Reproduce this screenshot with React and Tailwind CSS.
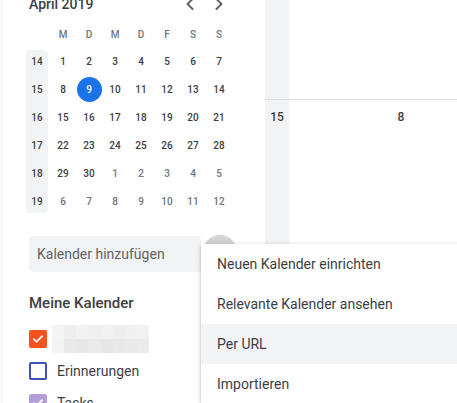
import React from 'react'
import { ChevronLeft, ChevronRight } from 'lucide-react'

const dayHeaders = ['M', 'D', 'M', 'D', 'F', 'S', 'S']

const weeks = [
  { nr: 14, days: [[1], [2], [3], [4], [5], [6], [7]] },
  { nr: 15, days: [[8], [9, 'sel'], [10], [11], [12], [13], [14]] },
  { nr: 16, days: [[15], [16], [17], [18], [19], [20], [21]] },
  { nr: 17, days: [[22], [23], [24], [25], [26], [27], [28]] },
  { nr: 18, days: [[29], [30], [1, 'out'], [2, 'out'], [3, 'out'], [4, 'out'], [5, 'out']] },
  { nr: 19, days: [[6, 'out'], [7, 'out'], [8, 'out'], [9, 'out'], [10, 'out'], [11, 'out'], [12, 'out']] },
]

const blurTop = ['#f4f4f4', '#eeeeee', '#f2f2f2', '#efefef', '#f1f1f1', '#eeeeee', '#f0f0f0', '#f1f1f1']
const blurBottom = ['#f3f3f3', '#e9e9e9', '#e7e7e7', '#eaeaea', '#e6e6e6', '#e8e8e8', '#e9e9e9', '#ebebeb']

const menuItems = ['Neuen Kalender einrichten', 'Relevante Kalender ansehen', 'Per URL', 'Importieren']

function MiniCalendar() {
  return (
    <div>
      <div className="ml-[29px] w-[200px] h-5 -mt-[6px] flex items-center justify-between">
        <span className="text-[14px] font-medium text-[#3c4043]">April 2019</span>
        <div className="flex gap-[9px] text-[#5f6368]">
          <ChevronLeft size={20} strokeWidth={2.4} />
          <ChevronRight size={20} strokeWidth={2.4} />
        </div>
      </div>
      <div className="ml-[24px] mt-[13px] grid grid-cols-[repeat(8,26px)] h-[14px] items-center">
        <span />
        {dayHeaders.map((d, i) => (
          <span key={i} className="text-center text-[10px] font-medium text-[#70757a]">{d}</span>
        ))}
      </div>
      <div className="ml-[24px] mt-[6px] relative">
        <div className="absolute left-[2px] top-[3px] bottom-[2px] w-[22px] rounded-[4px] bg-[#f1f3f4]" />
        {weeks.map((w) => (
          <div key={w.nr} className="relative grid grid-cols-[repeat(8,26px)] h-[28px] items-center">
            <span className="text-center text-[10px] font-medium text-[#3c4043]">{w.nr}</span>
            {w.days.map(([n, kind], i) => (
              <div key={i} className="flex justify-center">
                {kind === 'sel' ? (
                  <span className="w-[25px] h-[25px] rounded-full bg-[#1a73e8] text-white text-[10px] font-medium flex items-center justify-center">{n}</span>
                ) : (
                  <span className={`text-[10px] font-medium ${kind === 'out' ? 'text-[#70757a]' : 'text-[#3c4043]'}`}>{n}</span>
                )}
              </div>
            ))}
          </div>
        ))}
      </div>
    </div>
  )
}

function CalendarRow({ box, children }) {
  return (
    <div className="h-[32px] flex items-center">
      {box}
      {children}
    </div>
  )
}

function Check({ color }) {
  return (
    <span className={`w-[18px] h-[18px] rounded-[2px] flex items-center justify-center ${color}`}>
      <svg width="12" height="12" viewBox="0 0 24 24" fill="none" stroke="white" strokeWidth="3.5" strokeLinecap="square">
        <path d="M4 12.5l5 5L20 6.5" />
      </svg>
    </span>
  )
}

export default function App() {
  return (
    <div className="relative w-[457px] h-[403px] overflow-hidden bg-white flex" style={{ fontFamily: 'Roboto, "Liberation Sans", sans-serif' }}>
      <aside className="w-[265px] shrink-0 shadow-[inset_3px_0_0_#f7f7f7]">
        <MiniCalendar />

        <div className="ml-[29px] mt-[21px] flex">
          <div className="w-[172px] h-[36px] rounded-[4px] bg-[#f1f3f4] flex items-center pl-[8px] text-[14px] text-[#5f6368]">
            Kalender hinzufügen
          </div>
          <div className="ml-[2px] -mt-[1px] w-[34px] h-[34px] rounded-full bg-[#d3d3d3]" />
        </div>

        <div className="ml-[29px] mt-[21px] h-5 flex items-center text-[15px] font-medium text-[#3c4043]">
          Meine Kalender
        </div>

        <div className="ml-[29px] mt-[10px]">
          <CalendarRow box={<Check color="bg-[#f4511e]" />}>
            <div className="ml-[5px] w-[97px] h-[28px] flex flex-col">
              <div className="flex h-[14px]">
                {blurTop.map((c, i) => (
                  <span key={i} className="flex-1" style={{ background: c }} />
                ))}
              </div>
              <div className="flex h-[14px]">
                {blurBottom.map((c, i) => (
                  <span key={i} className="flex-1" style={{ background: c }} />
                ))}
              </div>
            </div>
          </CalendarRow>
          <CalendarRow box={<span className="w-[18px] h-[18px] rounded-[2px] border-2 border-[#3f51b5]" />}>
            <span className="ml-[10px] text-[14px] text-[#3c4043]">Erinnerungen</span>
          </CalendarRow>
          <CalendarRow box={<Check color="bg-[#b39ddb]" />}>
            <span className="ml-[10px] text-[14px] text-[#3c4043]">Tasks</span>
          </CalendarRow>
        </div>
      </aside>

      <main className="flex-1 flex flex-col">
        <div className="h-[100px] flex border-b border-[#dadce0]">
          <div className="w-[24px] bg-[#f1f3f4]" />
        </div>
        <div className="flex-1 flex">
          <div className="w-[24px] bg-[#f1f3f4] flex justify-center">
            <span className="mt-[8px] h-4 text-[12px] font-medium text-[#3c4043]">15</span>
          </div>
          <div className="w-[224px] shrink-0 flex justify-center">
            <span className="mt-[8px] h-4 text-[12px] font-medium text-[#3c4043]">8</span>
          </div>
        </div>
      </main>

      <div className="absolute left-[201px] top-[244px] w-[290px] bg-white shadow-[0_2px_2px_0_rgba(0,0,0,0.14),0_3px_1px_-2px_rgba(0,0,0,0.12),0_1px_5px_0_rgba(0,0,0,0.2)]">
        {menuItems.map((item) => (
          <div
            key={item}
            className={`h-[40px] flex items-center pl-[16px] text-[14px] text-[#3c4043] ${item === 'Per URL' ? 'bg-[#f1f3f4]' : ''}`}
          >
            {item}
          </div>
        ))}
      </div>
    </div>
  )
}
